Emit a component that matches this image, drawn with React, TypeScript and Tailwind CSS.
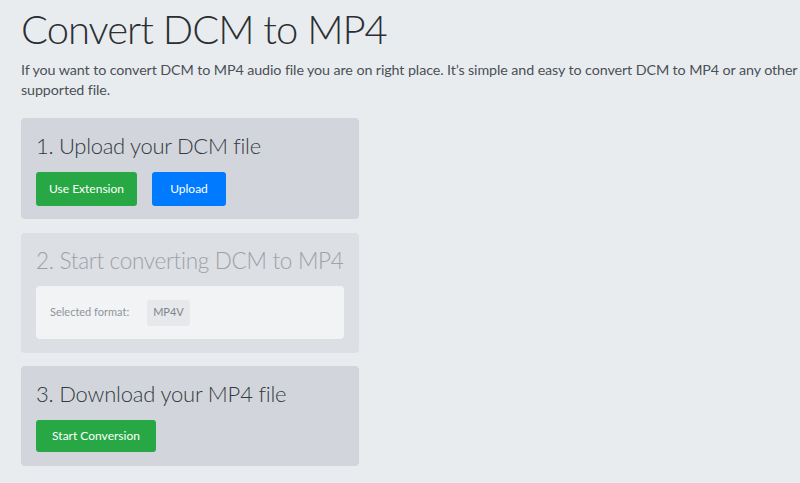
export default function App() {
  return (
    <div className="min-h-[483px] bg-[#e9ecef] px-[21px] pt-[5px] pb-4 font-['Lato',sans-serif] text-[#212529]">
      <h1 className="text-[40px] font-light leading-[48px] tracking-[-1px] text-[#2b2f33]">
        Convert DCM to MP4
      </h1>
      <p className="mt-[7px] mr-[-20px] text-[14.3px] leading-[20px] tracking-[-0.1px] text-[#495057]">
        If you want to convert DCM to MP4 audio file you are on right place. It’s simple and easy to convert DCM to MP4 or any other
        supported file.
      </p>

      <div className="mt-[18px] flex w-[338px] flex-col">
        <section className="rounded-[4px] bg-[#d2d6dc] px-[15px] pt-[14px] pb-[13px]">
          <h2 className="whitespace-nowrap text-[22px] font-light leading-[28px] tracking-[-0.3px] text-[#343a40]">
            1. Upload your DCM file
          </h2>
          <div className="mt-[12px] flex gap-[15px]">
            <button className="h-[34px] w-[101px] rounded-[3px] bg-[#28a745] text-[12px] text-white">Use Extension</button>
            <button className="h-[34px] w-[74px] rounded-[3px] bg-[#007bff] text-[12px] text-white">Upload</button>
          </div>
        </section>

        <section className="mt-[14px] rounded-[4px] bg-[#dcdfe3] px-[15px] pt-[14px] pb-[14px]">
          <h2 className="whitespace-nowrap text-[22.5px] font-light leading-[28px] tracking-[-0.3px] text-[#9ea2a7]">
            2. Start converting DCM to MP4
          </h2>
          <div className="mt-[11px] flex h-[53px] items-center rounded-[4px] bg-[#f1f3f5] px-[14px]">
            <span className="text-[11px] text-[#8f9499]">Selected format:</span>
            <span className="ml-[18px] flex h-[26px] items-center rounded-[3px] bg-[#e6e8eb] px-[6px] text-[11px] text-[#7f8489]">
              MP4V
            </span>
          </div>
        </section>

        <section className="mt-[13px] rounded-[4px] bg-[#d2d6dc] px-[15px] pt-[14px] pb-[14px]">
          <h2 className="whitespace-nowrap text-[22px] font-light leading-[28px] tracking-[-0.2px] text-[#343a40]">
            3. Download your MP4 file
          </h2>
          <div className="mt-[12px] flex">
            <button className="h-[32px] w-[120px] rounded-[3px] bg-[#28a745] text-[12px] text-white">Start Conversion</button>
          </div>
        </section>
      </div>
    </div>
  );
}
